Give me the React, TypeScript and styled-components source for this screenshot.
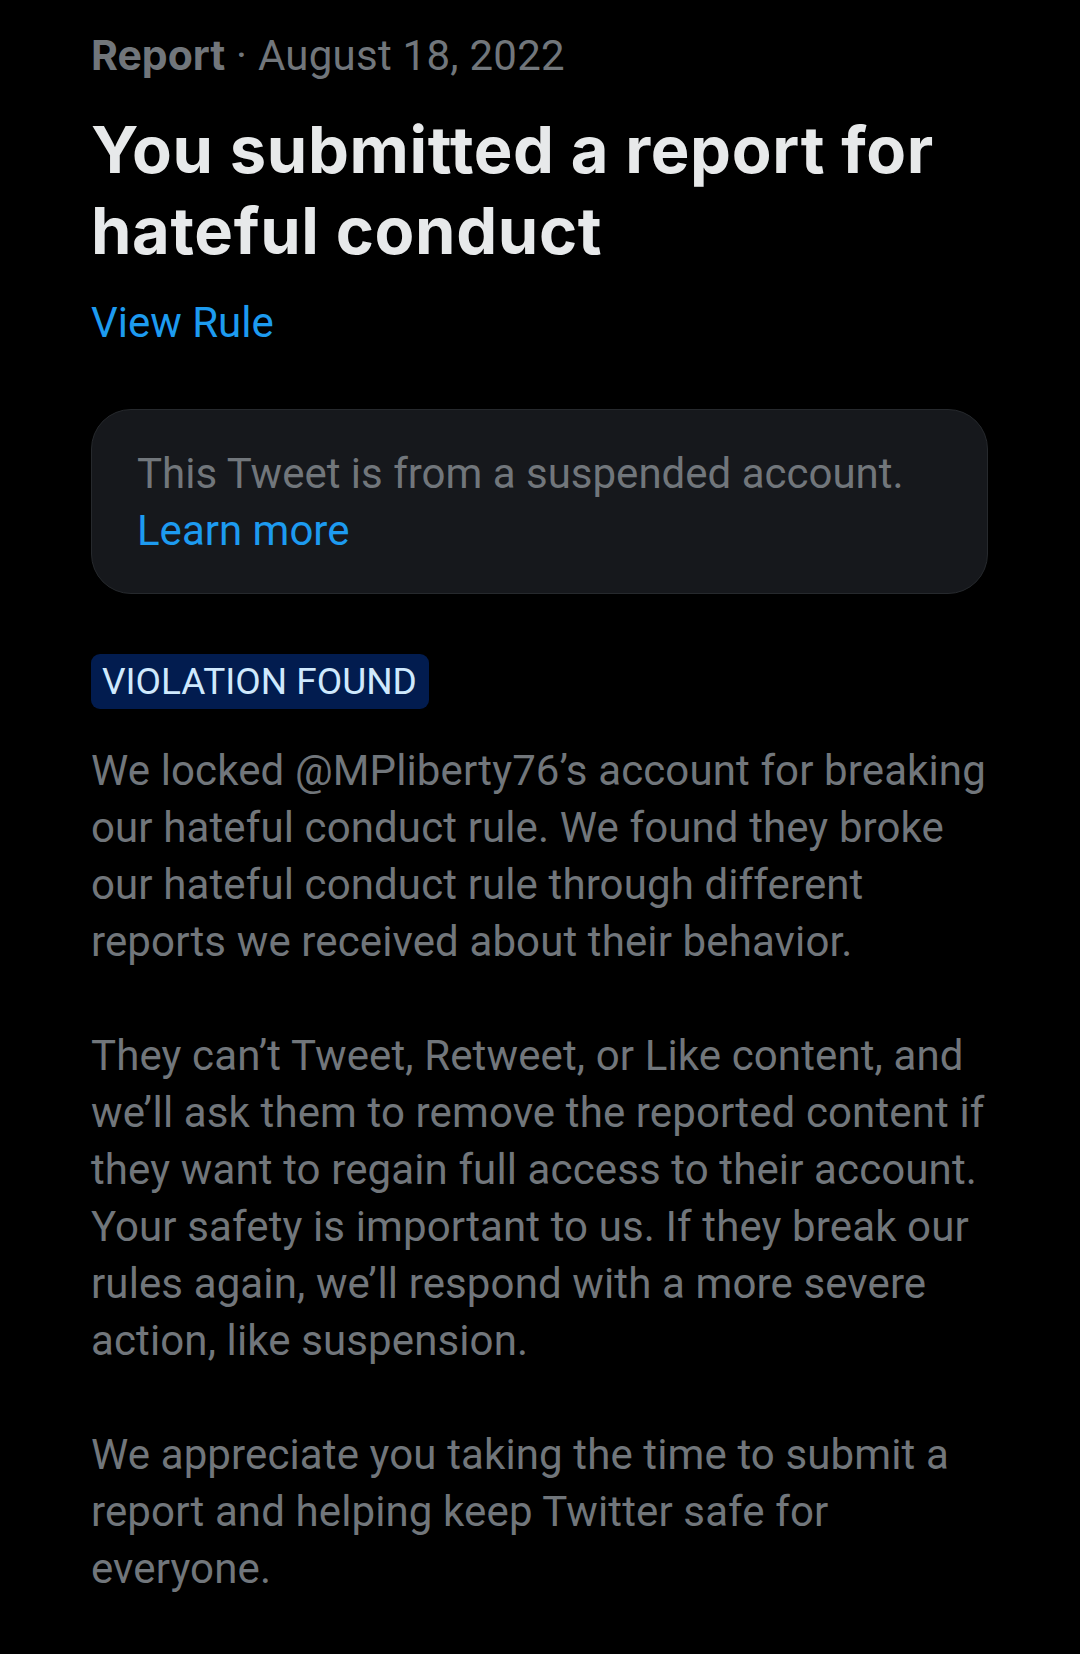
import React from "react";
import styled, { createGlobalStyle } from "styled-components";

const GlobalStyle = createGlobalStyle`
  html, body {
    margin: 0;
    padding: 0;
    background: #000000;
  }
  * { box-sizing: border-box; }
`;

const Page = styled.main`
  min-height: 100vh;
  background: #000000;
  padding: 27px 92px 40px 91px;
  display: flex;
  flex-direction: column;
  align-items: stretch;
  font-family: Roboto, "Liberation Sans", sans-serif;
  -webkit-font-smoothing: antialiased;
`;

const Meta = styled.div`
  font-size: 42px;
  line-height: 57px;
  letter-spacing: 0.25px;
  color: #71767b;
  white-space: nowrap;
`;

const MetaStrong = styled.span`
  font-family: Inter, Roboto, sans-serif;
  font-weight: 700;
  font-size: 41px;
  letter-spacing: 0;
`;

const Title = styled.h1`
  margin: 25px 0 0;
  font-family: Inter, Roboto, sans-serif;
  font-weight: 700;
  font-size: 65px;
  line-height: 81px;
  letter-spacing: 0.65px;
  color: #e7e9ea;
`;

const Link = styled.a<{ $inline?: boolean }>`
  display: ${(p) => (p.$inline ? "inline" : "block")};
  color: #1d9bf0;
  text-decoration: none;
  font-size: 42px;
  line-height: 57px;
  cursor: pointer;
`;

const RuleLink = styled(Link)`
  margin-top: 23px;
  align-self: flex-start;
`;

const Card = styled.section`
  margin-top: 58px;
  background: #16181c;
  border: 1px solid #26292d;
  border-radius: 40px;
  padding: 35px 40px 34px 45px;
`;

const CardText = styled.p`
  margin: 0;
  font-size: 42px;
  line-height: 57px;
  color: #71767b;
`;

const Badge = styled.span`
  margin-top: 60px;
  align-self: flex-start;
  background: #021c4f;
  color: #cfe9fd;
  border-radius: 9px;
  padding: 0 12px 0 11px;
  font-size: 37px;
  line-height: 55px;
  white-space: nowrap;
`;

const Body = styled.div`
  margin-top: 33px;
  display: flex;
  flex-direction: column;
  gap: 57px;
`;

const Paragraph = styled.p`
  margin: 0;
  font-size: 42px;
  line-height: 57px;
  letter-spacing: 0.12px;
  color: #71767b;
  white-space: nowrap;
`;

const paragraphs: string[][] = [
  [
    "We locked @MPliberty76\u2019s account for breaking",
    "our hateful conduct rule. We found they broke",
    "our hateful conduct rule through different",
    "reports we received about their behavior.",
  ],
  [
    "They can\u2019t Tweet, Retweet, or Like content, and",
    "we\u2019ll ask them to remove the reported content if",
    "they want to regain full access to their account.",
    "Your safety is important to us. If they break our",
    "rules again, we\u2019ll respond with a more severe",
    "action, like suspension.",
  ],
  [
    "We appreciate you taking the time to submit a",
    "report and helping keep Twitter safe for",
    "everyone.",
  ],
];

export default function App() {
  return (
    <>
      <GlobalStyle />
      <Page>
        <Meta>
          <MetaStrong>Report</MetaStrong> · August 18, 2022
        </Meta>
        <Title>
          You submitted a report for
          <br />
          hateful conduct
        </Title>
        <RuleLink>View Rule</RuleLink>
        <Card>
          <CardText>This Tweet is from a suspended account.</CardText>
          <Link>Learn more</Link>
        </Card>
        <Badge>VIOLATION FOUND</Badge>
        <Body>
          {paragraphs.map((lines, i) => (
            <Paragraph key={i}>
              {lines.map((line, j) => (
                <React.Fragment key={j}>
                  {line}
                  {j < lines.length - 1 && <br />}
                </React.Fragment>
              ))}
            </Paragraph>
          ))}
        </Body>
      </Page>
    </>
  );
}
